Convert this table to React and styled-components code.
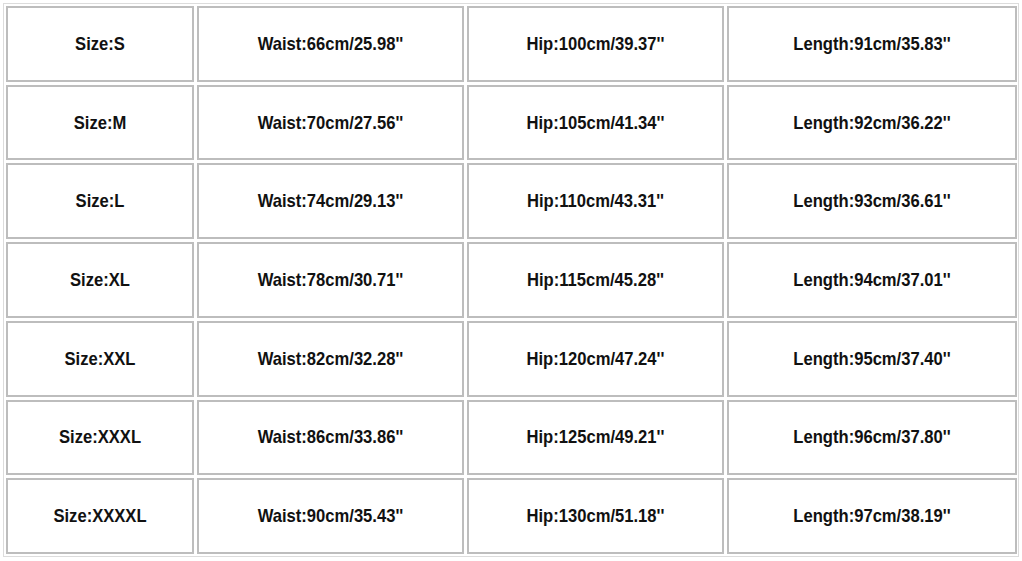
import React from 'react';
import styled, { createGlobalStyle } from 'styled-components';

const GlobalStyle = createGlobalStyle`
  html, body {
    margin: 0;
    padding: 0;
    background: #fff;
  }
  body {
    font-family: "Liberation Sans", Arial, sans-serif;
  }
`;

const Chart = styled.div`
  margin: 3px 0 0 3px;
  width: 1016px;
  height: 554px;
  box-sizing: border-box;
  border: 1px solid #dcdcdc;
  padding: 2px;
  display: grid;
  grid-template-columns: 188px 267px 257px 290px;
  grid-template-rows: repeat(7, 1fr);
  gap: 3px;
`;

const Cell = styled.div`
  box-sizing: border-box;
  border: 2px solid #bdbdbd;
  display: flex;
  align-items: center;
  justify-content: center;
  color: #111;
  font-weight: 700;
  font-size: 16.6px;
  span {
    display: inline-block;
    transform: scaleY(1.12);
  }
`;

const rows = [
  ['S', '66cm/25.98', '100cm/39.37', '91cm/35.83'],
  ['M', '70cm/27.56', '105cm/41.34', '92cm/36.22'],
  ['L', '74cm/29.13', '110cm/43.31', '93cm/36.61'],
  ['XL', '78cm/30.71', '115cm/45.28', '94cm/37.01'],
  ['XXL', '82cm/32.28', '120cm/47.24', '95cm/37.40'],
  ['XXXL', '86cm/33.86', '125cm/49.21', '96cm/37.80'],
  ['XXXXL', '90cm/35.43', '130cm/51.18', '97cm/38.19'],
];

function App() {
  return (
    <>
      <GlobalStyle />
      <Chart>
        {rows.map(([size, waist, hip, length]) => (
          <React.Fragment key={size}>
            <Cell><span>Size:{size}</span></Cell>
            <Cell><span>Waist:{waist}''</span></Cell>
            <Cell><span>Hip:{hip}''</span></Cell>
            <Cell><span>Length:{length}''</span></Cell>
          </React.Fragment>
        ))}
      </Chart>
    </>
  );
}

export default App;
